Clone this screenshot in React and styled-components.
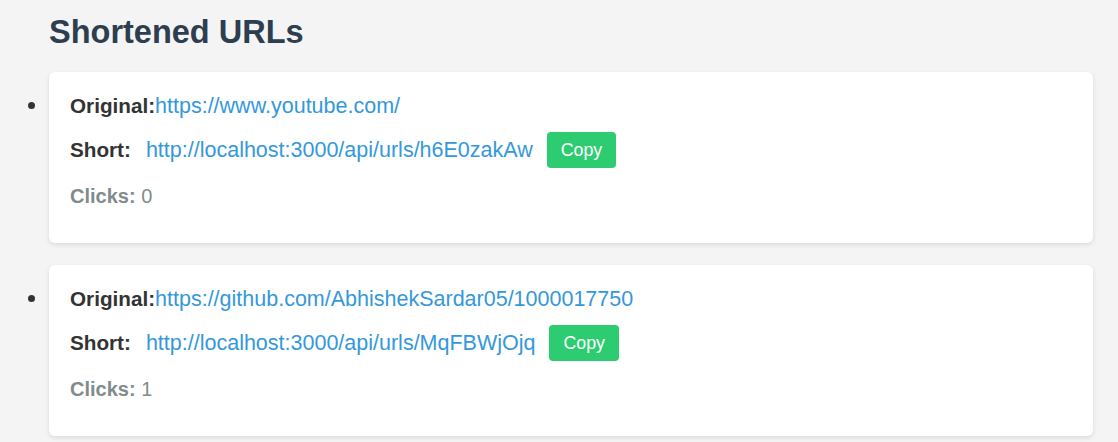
import styled, { createGlobalStyle } from "styled-components";

const urls = [
  {
    original: "https://www.youtube.com/",
    short: "http://localhost:3000/api/urls/h6E0zakAw",
    clicks: 0,
  },
  {
    original: "https://github.com/AbhishekSardar05/1000017750",
    short: "http://localhost:3000/api/urls/MqFBWjOjq",
    clicks: 1,
  },
];

function App() {
  return (
    <>
      <GlobalStyle />
      <Page>
        <Title>Shortened URLs</Title>
        <List>
          {urls.map((u) => (
            <Item key={u.short}>
              <Card>
                <Row>
                  <Label>Original:</Label>
                  <Link href={u.original}>{u.original}</Link>
                </Row>
                <ShortRow>
                  <Label>Short:</Label>
                  <Link href={u.short} $spaced>
                    {u.short}
                  </Link>
                  <CopyButton>Copy</CopyButton>
                </ShortRow>
                <Clicks>
                  <strong>Clicks:</strong> {u.clicks}
                </Clicks>
              </Card>
            </Item>
          ))}
        </List>
      </Page>
    </>
  );
}

const GlobalStyle = createGlobalStyle`
  html, body {
    margin: 0;
    background: #f4f4f4;
    font-family: "Liberation Sans", Arial, sans-serif;
  }
`;

const Page = styled.div`
  min-height: 100vh;
  padding: 14px 25px 0 9px;
  box-sizing: border-box;
`;

const Title = styled.h1`
  margin: 0 0 21px 40px;
  font-size: 32.5px;
  font-weight: 700;
  color: #2c3e50;
`;

const List = styled.ul`
  margin: 0;
  padding-left: 40px;
`;

const Item = styled.li`
  margin-bottom: 22px;
  font-size: 23px;
  color: #333;
`;

const Card = styled.div`
  background: #fff;
  border-radius: 6px;
  box-shadow: 0 2px 5px rgba(0, 0, 0, 0.1);
  padding: 22px 21px 35px;
`;

const Row = styled.div`
  display: flex;
  align-items: baseline;
  line-height: 24px;
  margin-bottom: 14px;
`;

const ShortRow = styled(Row)`
  align-items: center;
  margin-bottom: 16px;
`;

const Label = styled.span`
  font-size: 20.7px;
  font-weight: 700;
  color: #333;
`;

const Link = styled.a`
  font-size: 21.5px;
  color: #3498db;
  text-decoration: none;
  margin-left: ${(p) => (p.$spaced ? "15px" : "0")};
`;

const CopyButton = styled.button`
  margin-left: 14px;
  height: 36px;
  padding: 0 14px;
  border: none;
  border-radius: 4px;
  background: #2ecc71;
  color: #fff;
  font-family: "Liberation Sans", Arial, sans-serif;
  font-size: 17.8px;
  cursor: pointer;
`;

const Clicks = styled.div`
  font-size: 20px;
  line-height: 24px;
  color: #7f8c8d;
`;

export default App;
